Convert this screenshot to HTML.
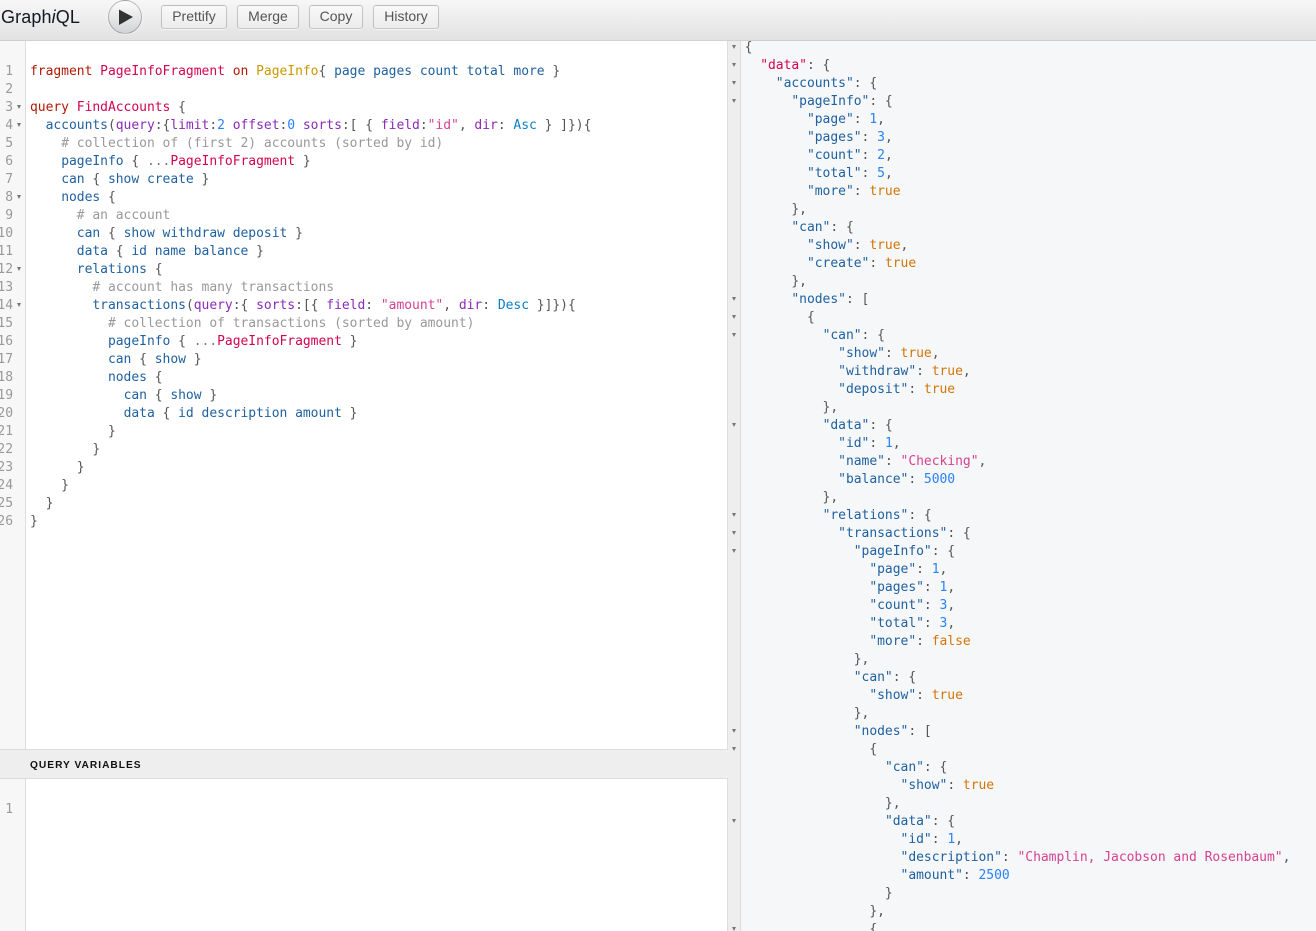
<!DOCTYPE html>
<html><head><meta charset="utf-8"><style>
html,body{margin:0;padding:0;width:1316px;height:931px;overflow:hidden;background:#fff}
*{box-sizing:border-box}
#tb{position:absolute;left:0;top:0;width:1316px;height:41px;background:linear-gradient(#f7f7f7,#e2e2e2);border-bottom:1px solid #d0d0d0}
#title{position:absolute;left:1px;top:6px;font:18px/22px "Liberation Sans",sans-serif;letter-spacing:.12px;color:#141823}
#run{position:absolute;left:108px;top:0;width:34px;height:34px;border-radius:17px;background:linear-gradient(#fdfdfd,#d2d3d6);border:1px solid rgba(0,0,0,.25);box-shadow:0 0 0 1px rgba(255,255,255,.3)}
.b{position:absolute;top:5px;height:24px;background:linear-gradient(#f9f9f9,#ececec);border:1px solid rgba(0,0,0,.2);border-radius:3px;font:14px/20px "Liberation Sans",sans-serif;color:#555;text-align:center;box-shadow:0 1px 0 rgba(255,255,255,.5)}
#g1{position:absolute;left:0;top:41px;width:26px;height:890px;background:#f7f7f7;border-right:1px solid #ddd}
#bar{position:absolute;left:0;top:749px;width:728px;height:30px;background:#eee;border-top:1px solid #ddd;border-bottom:1px solid #ddd;font:bold 10.2px/31px "Liberation Sans",sans-serif;letter-spacing:1px;padding-left:30px;color:#111}
#res{position:absolute;left:727px;top:41px;width:589px;height:890px;background:#f6f7f8}
#g2{position:absolute;left:727px;top:41px;width:14px;height:890px;background:#eee;border-left:1px solid #ddd;border-right:1px solid #ddd}
pre{position:absolute;margin:0;font:13px/18px "DejaVu Sans Mono",monospace;color:#555;white-space:pre;overflow:hidden;letter-spacing:-.03px}
#q{left:30px;top:63px;width:697px}
#r{left:744.6px;top:41px;width:571px;height:890px}
#r div{position:relative;top:-2px}
#n{left:-7px;top:63px;width:20px;text-align:right;color:#999;overflow:hidden}
.f{position:absolute;width:0;height:0;border-left:2.5px solid transparent;border-right:2.5px solid transparent;border-top:4px solid #777}
.k{color:#B11A04}.d{color:#D2054E}.p{color:#1F61A0}.q{color:#0B7FC7}.a{color:#8B2BB9}.m{color:#2882F9}.s{color:#D64292}.t{color:#D47509}.y{color:#CA9800}.c{color:#999}.l{color:#777}
</style></head><body>
<div id="res"></div>
<div id="g1"></div>
<div id="g2"></div>
<div id="tb">
<div id="title">Graph<i>i</i>QL</div>
<div id="run"><svg width="32" height="32" viewBox="0 0 32 32" style="position:absolute;left:0;top:0"><path d="M10 8.5 L24 16 L10 24 Z" fill="#333"/></svg></div>
<div class="b" style="left:161px;width:66px">Prettify</div>
<div class="b" style="left:237px;width:62px">Merge</div>
<div class="b" style="left:309px;width:54px">Copy</div>
<div class="b" style="left:373px;width:66px">History</div>
</div>
<pre id="n">1
2
3
4
5
6
7
8
9
10
11
12
13
14
15
16
17
18
19
20
21
22
23
24
25
26</pre>
<pre style="left:0;top:801px;width:13px;text-align:right;color:#999">1</pre>
<div class="f" style="left:17px;top:105px"></div>
<div class="f" style="left:17px;top:123px"></div>
<div class="f" style="left:17px;top:195px"></div>
<div class="f" style="left:17px;top:267px"></div>
<div class="f" style="left:17px;top:303px"></div>
<pre id="q"><span class="k">fragment</span> <span class="d">PageInfoFragment</span> <span class="k">on</span> <span class="y">PageInfo</span>{ <span class="p">page</span> <span class="p">pages</span> <span class="p">count</span> <span class="p">total</span> <span class="p">more</span> }

<span class="k">query</span> <span class="d">FindAccounts</span> {
  <span class="p">accounts</span>(<span class="a">query</span>:{<span class="a">limit</span>:<span class="m">2</span> <span class="a">offset</span>:<span class="m">0</span> <span class="a">sorts</span>:[ { <span class="a">field</span>:<span class="s">"id"</span>, <span class="a">dir</span>: <span class="q">Asc</span> } ]}){
    <span class="c"># collection of (first 2) accounts (sorted by id)</span>
    <span class="p">pageInfo</span> { <span class="l">...</span><span class="d">PageInfoFragment</span> }
    <span class="p">can</span> { <span class="p">show</span> <span class="p">create</span> }
    <span class="p">nodes</span> {
      <span class="c"># an account</span>
      <span class="p">can</span> { <span class="p">show</span> <span class="p">withdraw</span> <span class="p">deposit</span> }
      <span class="p">data</span> { <span class="p">id</span> <span class="p">name</span> <span class="p">balance</span> }
      <span class="p">relations</span> {
        <span class="c"># account has many transactions</span>
        <span class="p">transactions</span>(<span class="a">query</span>:{ <span class="a">sorts</span>:[{ <span class="a">field</span>: <span class="s">"amount"</span>, <span class="a">dir</span>: <span class="q">Desc</span> }]}){
          <span class="c"># collection of transactions (sorted by amount)</span>
          <span class="p">pageInfo</span> { <span class="l">...</span><span class="d">PageInfoFragment</span> }
          <span class="p">can</span> { <span class="p">show</span> }
          <span class="p">nodes</span> {
            <span class="p">can</span> { <span class="p">show</span> }
            <span class="p">data</span> { <span class="p">id</span> <span class="p">description</span> <span class="p">amount</span> }
          }
        }
      }
    }
  }
}</pre>
<div id="bar">QUERY VARIABLES</div>
<pre id="r"><div>{
  <span class="d">"data"</span>: {
    <span class="p">"accounts"</span>: {
      <span class="p">"pageInfo"</span>: {
        <span class="p">"page"</span>: <span class="m">1</span>,
        <span class="p">"pages"</span>: <span class="m">3</span>,
        <span class="p">"count"</span>: <span class="m">2</span>,
        <span class="p">"total"</span>: <span class="m">5</span>,
        <span class="p">"more"</span>: <span class="t">true</span>
      },
      <span class="p">"can"</span>: {
        <span class="p">"show"</span>: <span class="t">true</span>,
        <span class="p">"create"</span>: <span class="t">true</span>
      },
      <span class="p">"nodes"</span>: [
        {
          <span class="p">"can"</span>: {
            <span class="p">"show"</span>: <span class="t">true</span>,
            <span class="p">"withdraw"</span>: <span class="t">true</span>,
            <span class="p">"deposit"</span>: <span class="t">true</span>
          },
          <span class="p">"data"</span>: {
            <span class="p">"id"</span>: <span class="m">1</span>,
            <span class="p">"name"</span>: <span class="s">"Checking"</span>,
            <span class="p">"balance"</span>: <span class="m">5000</span>
          },
          <span class="p">"relations"</span>: {
            <span class="p">"transactions"</span>: {
              <span class="p">"pageInfo"</span>: {
                <span class="p">"page"</span>: <span class="m">1</span>,
                <span class="p">"pages"</span>: <span class="m">1</span>,
                <span class="p">"count"</span>: <span class="m">3</span>,
                <span class="p">"total"</span>: <span class="m">3</span>,
                <span class="p">"more"</span>: <span class="t">false</span>
              },
              <span class="p">"can"</span>: {
                <span class="p">"show"</span>: <span class="t">true</span>
              },
              <span class="p">"nodes"</span>: [
                {
                  <span class="p">"can"</span>: {
                    <span class="p">"show"</span>: <span class="t">true</span>
                  },
                  <span class="p">"data"</span>: {
                    <span class="p">"id"</span>: <span class="m">1</span>,
                    <span class="p">"description"</span>: <span class="s">"Champlin, Jacobson and Rosenbaum"</span>,
                    <span class="p">"amount"</span>: <span class="m">2500</span>
                  }
                },
                {</div></pre>
<div class="f" style="left:732px;top:45px"></div>
<div class="f" style="left:732px;top:63px"></div>
<div class="f" style="left:732px;top:81px"></div>
<div class="f" style="left:732px;top:99px"></div>
<div class="f" style="left:732px;top:297px"></div>
<div class="f" style="left:732px;top:315px"></div>
<div class="f" style="left:732px;top:333px"></div>
<div class="f" style="left:732px;top:423px"></div>
<div class="f" style="left:732px;top:513px"></div>
<div class="f" style="left:732px;top:531px"></div>
<div class="f" style="left:732px;top:549px"></div>
<div class="f" style="left:732px;top:729px"></div>
<div class="f" style="left:732px;top:747px"></div>
<div class="f" style="left:732px;top:819px"></div>
<div class="f" style="left:732px;top:927px"></div>
</body></html>
